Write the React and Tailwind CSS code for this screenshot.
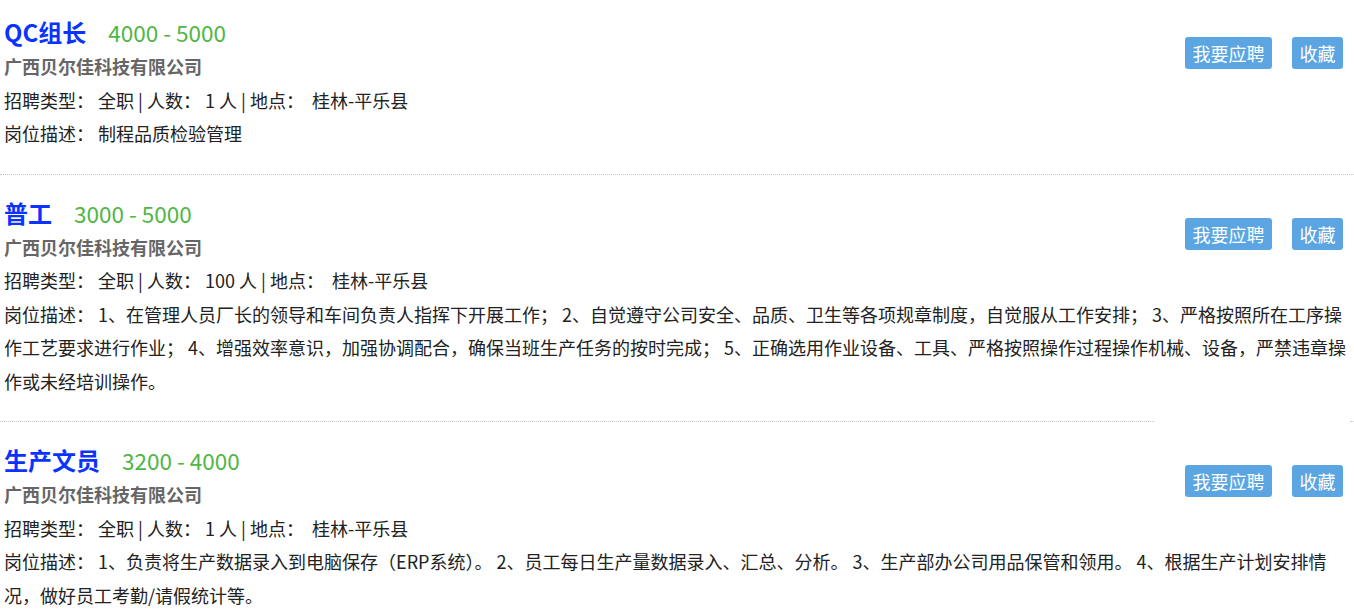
const jobs = [
  {
    title: 'QC组长',
    salary: '4000 - 5000',
    count: '1',
    desc: '制程品质检验管理',
  },
  {
    title: '普工',
    salary: '3000 - 5000',
    count: '100',
    desc: '1、在管理人员厂长的领导和车间负责人指挥下开展工作； 2、自觉遵守公司安全、品质、卫生等各项规章制度，自觉服从工作安排； 3、严格按照所在工序操作工艺要求进行作业； 4、增强效率意识，加强协调配合，确保当班生产任务的按时完成； 5、正确选用作业设备、工具、严格按照操作过程操作机械、设备，严禁违章操作或未经培训操作。',
  },
  {
    title: '生产文员',
    salary: '3200 - 4000',
    count: '1',
    desc: '1、负责将生产数据录入到电脑保存（ERP系统）。 2、员工每日生产量数据录入、汇总、分析。 3、生产部办公司用品保管和领用。 4、根据生产计划安排情况，做好员工考勤/请假统计等。',
  },
];

const JobItem = ({ job, first }) => (
  <div className={`pl-1 pr-1 ${first ? 'pt-[14px]' : 'pt-[20px]'} pb-[23px]`}>
    <div className="float-right mt-[23px] mr-[7px] flex gap-5">
      <button className="h-8 px-[7.5px] rounded-[3px] bg-[#5ba6e2] text-white text-[18px] leading-8">
        我要应聘
      </button>
      <button className="h-8 px-[7.5px] rounded-[3px] bg-[#5ba6e2] text-white text-[18px] leading-8">
        收藏
      </button>
    </div>
    <div className="flex items-baseline leading-9">
      <span className="text-[24px] font-bold text-[#0b33ff]">{job.title}</span>
      <span className="ml-[22px] text-[22.5px] text-[#4fb644]">{job.salary}</span>
    </div>
    <div className="text-[18px] font-bold text-[#666] leading-[33.5px]">广西贝尔佳科技有限公司</div>
    <div className="text-[18px] text-[#222] leading-[33.5px]">
      招聘类型： 全职 | 人数： {job.count} 人 | 地点：&nbsp; 桂林-平乐县
    </div>
    <div className="text-[18px] text-[#222] leading-[33.5px]">
      岗位描述： {job.desc}
    </div>
  </div>
);

export default function App() {
  return (
    <div className="w-[1354px] bg-white font-['Noto_Sans_CJK_SC','Microsoft_YaHei',sans-serif]">
      <JobItem job={jobs[0]} first />
      <div className="border-t border-dotted border-[#c8c8c8]" />
      <JobItem job={jobs[1]} />
      <div className="flex">
        <div className="w-[1155px] border-t border-dotted border-[#c8c8c8]" />
        <div className="flex-1" />
        <div className="w-1 border-t border-dotted border-[#c8c8c8]" />
      </div>
      <JobItem job={jobs[2]} />
    </div>
  );
}
